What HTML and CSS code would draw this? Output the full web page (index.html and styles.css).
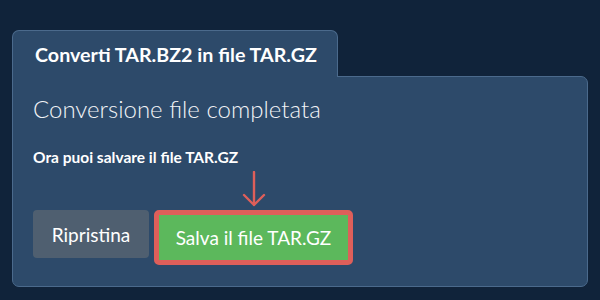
FILE: index.html
```html
<!DOCTYPE html>
<html>
<head>
<meta charset="utf-8">
<link rel="stylesheet" href="styles.css">
</head>
<body>
<div class="wrap">
  <div class="tab">Converti TAR.BZ2 in file TAR.GZ</div>
  <div class="panel">
    <h2 class="heading">Conversione file completata</h2>
    <p class="sub">Ora puoi salvare il file TAR.GZ</p>
    <div class="actions">
      <button class="btn reset">Ripristina</button>
      <div class="save-wrap">
        <svg class="arrow" width="24" height="36" viewBox="0 0 24 36">
          <path d="M12 1 V34 M2 24 L12 34 L22 24" fill="none" stroke="#de5f5a" stroke-width="2.4" stroke-linecap="round" stroke-linejoin="round"/>
        </svg>
        <button class="btn save">Salva il file TAR.GZ</button>
      </div>
    </div>
  </div>
</div>
</body>
</html>
```

FILE: styles.css
```css
html, body {
  margin: 0;
  padding: 0;
  background: #10233a;
  font-family: Lato, "Open Sans", sans-serif;
  color: #ffffff;
}
.wrap {
  padding: 30px 12px 0 12px;
  width: 576px;
}
.tab {
  display: inline-block;
  box-sizing: border-box;
  width: 326px;
  height: 47px;
  padding: 12px 0 0 22px;
  background: #2d4a6a;
  border: 1px solid #4b6a8c;
  border-bottom: none;
  border-radius: 7px 7px 0 0;
  font-size: 19.7px;
  line-height: 24px;
  font-weight: 700;
  position: relative;
  z-index: 1;
  margin-bottom: -1px;
}
.panel {
  box-sizing: border-box;
  height: 211px;
  background: #2d4a6a;
  border: 1px solid #4b6a8c;
  border-radius: 0 7px 7px 7px;
  padding: 17px 0 0 20px;
}
.heading {
  margin: 0;
  font-size: 24px;
  font-weight: 300;
  line-height: 30px;
  color: #f2f4f7;
}
.sub {
  margin: 24px 0 0 0;
  font-size: 15.5px;
  font-weight: 700;
  line-height: 18px;
}
.actions {
  display: flex;
  align-items: flex-start;
  gap: 5px;
  margin-top: 44px;
}
.btn {
  font-family: Lato, "Open Sans", sans-serif;
  font-size: 19px;
  color: #ffffff;
  border: none;
  border-radius: 4px;
}
.reset {
  width: 116px;
  height: 48px;
  background: #4f5f70;
  padding: 0;
}
.save-wrap {
  position: relative;
}
.arrow {
  position: absolute;
  left: 88px;
  top: -39px;
}
.save {
  box-sizing: border-box;
  width: 199px;
  height: 55px;
  background: #5cb85c;
  border: 5px solid #de5f5a;
  border-radius: 5px;
  padding: 0;
}
```
